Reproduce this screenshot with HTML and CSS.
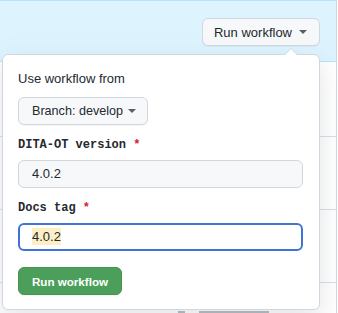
FILE: index.html
```html
<!DOCTYPE html>
<html lang="en">
<head>
  <title>Run workflow</title>
  <link rel="stylesheet" href="styles.css">
</head>

<body>
  <main class="runs">
    <header class="banner">
      <button class="btn">Run workflow <span class="caret"></span></button>
    </header>

    <div class="row"></div>
    <div class="row"></div>
    <div class="row"></div>
    <div class="row">
      <!-- the row text sits under the popover, only its top shows -->
      <div class="meta"><span class="blot"></span><span class="blot wide"></span></div>
    </div>

    <form class="popover">
      <div class="title">Use workflow from</div>
      <button type="button" class="btn branch">Branch: develop <span class="caret"></span></button>

      <label class="label">DITA-OT version <span class="req">*</span></label>
      <div class="input">4.0.2</div>

      <label class="label">Docs tag <span class="req">*</span></label>
      <div class="input focus"><span class="sel">4.0.2</span></div>

      <button type="button" class="btn primary">Run workflow</button>
    </form>
  </main>
</body>
</html>
```

FILE: styles.css
```css
*,
*::before,
*::after {
  box-sizing: border-box;
}

html {
  font-family: "Liberation Sans", Arial, sans-serif;
  font-size: 13px;
  color: #24292f;
}
body {
  margin: 0;
  background: #fff;
  overflow: hidden;
}

.runs {
  position: relative;
  width: 337px;
  height: 313px;
  overflow: hidden;
  border-right: 1px solid #d0d7de;
}

.banner {
  display: flex;
  justify-content: flex-end;
  height: 62px;
  padding: 17px 16px 0 0;
  background: #ddf4ff;
  border-top: 1px solid #b6e3ff;
  border-bottom: 1px solid #b6e3ff;
}

.row {
  height: 73px;
  border-bottom: 1px solid #d8dee4;
}
.row:nth-of-type(1) {
  height: 75px;
}

.meta {
  display: flex;
  gap: 14px;
  margin: 28px 0 0 178px;
}
.blot {
  width: 7px;
  height: 6px;
  background: #b1b8bf;
}
.blot.wide {
  width: 70px;
}

.btn {
  display: inline-flex;
  align-items: center;
  height: 28px;
  padding: 0 12px 0 11px;
  font: inherit;
  color: #24292f;
  background: #f6f8fa;
  border: 1px solid #d0d7de;
  border-radius: 6px;
  box-shadow: 0 1px 0 rgba(27, 31, 36, 0.04);
}

.caret {
  display: inline-block;
  margin-left: 7px;
  border-top: 4px solid #57606a;
  border-left: 4px solid transparent;
  border-right: 4px solid transparent;
}

.popover {
  position: absolute;
  left: 2px;
  top: 54px;
  width: 318px;
  height: 256px;
  display: flex;
  flex-direction: column;
  align-items: flex-start;
  padding: 14px 16px 0 15px;
  background: #fff;
  border: 1px solid #d0d7de;
  border-radius: 6px;
  box-shadow: 0 8px 24px rgba(140, 149, 159, 0.25);
}
.popover::before,
.popover::after {
  content: "";
  position: absolute;
  right: 21px;
  border: 7px solid transparent;
  border-top: 0;
}
.popover::before {
  top: -7px;
  border-bottom: 7px solid #d0d7de;
}
.popover::after {
  top: -6px;
  border-bottom: 7px solid #fff;
}

.title {
  line-height: 20px;
}

.branch {
  margin-top: 8px;
  padding: 0 11px 0 13px;
  font-size: 12.6px;
}
.branch .caret {
  margin-left: 5px;
}

.label {
  margin-top: 10px;
  line-height: 20px;
  font-family: "Liberation Mono", "DejaVu Sans Mono", monospace;
  font-size: 12px;
  font-weight: 700;
}
.req {
  color: #cf222e;
}

.input {
  align-self: stretch;
  height: 28px;
  margin-top: 5px;
  padding: 0 13px;
  line-height: 26px;
  background: #f6f8fa;
  border: 1px solid #d0d7de;
  border-radius: 6px;
}
.input.focus {
  padding: 0 12px;
  line-height: 24px;
  background: #fff;
  border: 2px solid #3f74d6;
}
.sel {
  padding: 1px 0;
  background: #fcefc6;
}

.primary {
  margin-top: 16px;
  padding: 0 13px;
  font-size: 11.6px;
  font-weight: 700;
  color: #fff;
  background: #4c9f5a;
  border-color: #46944f;
}
```
